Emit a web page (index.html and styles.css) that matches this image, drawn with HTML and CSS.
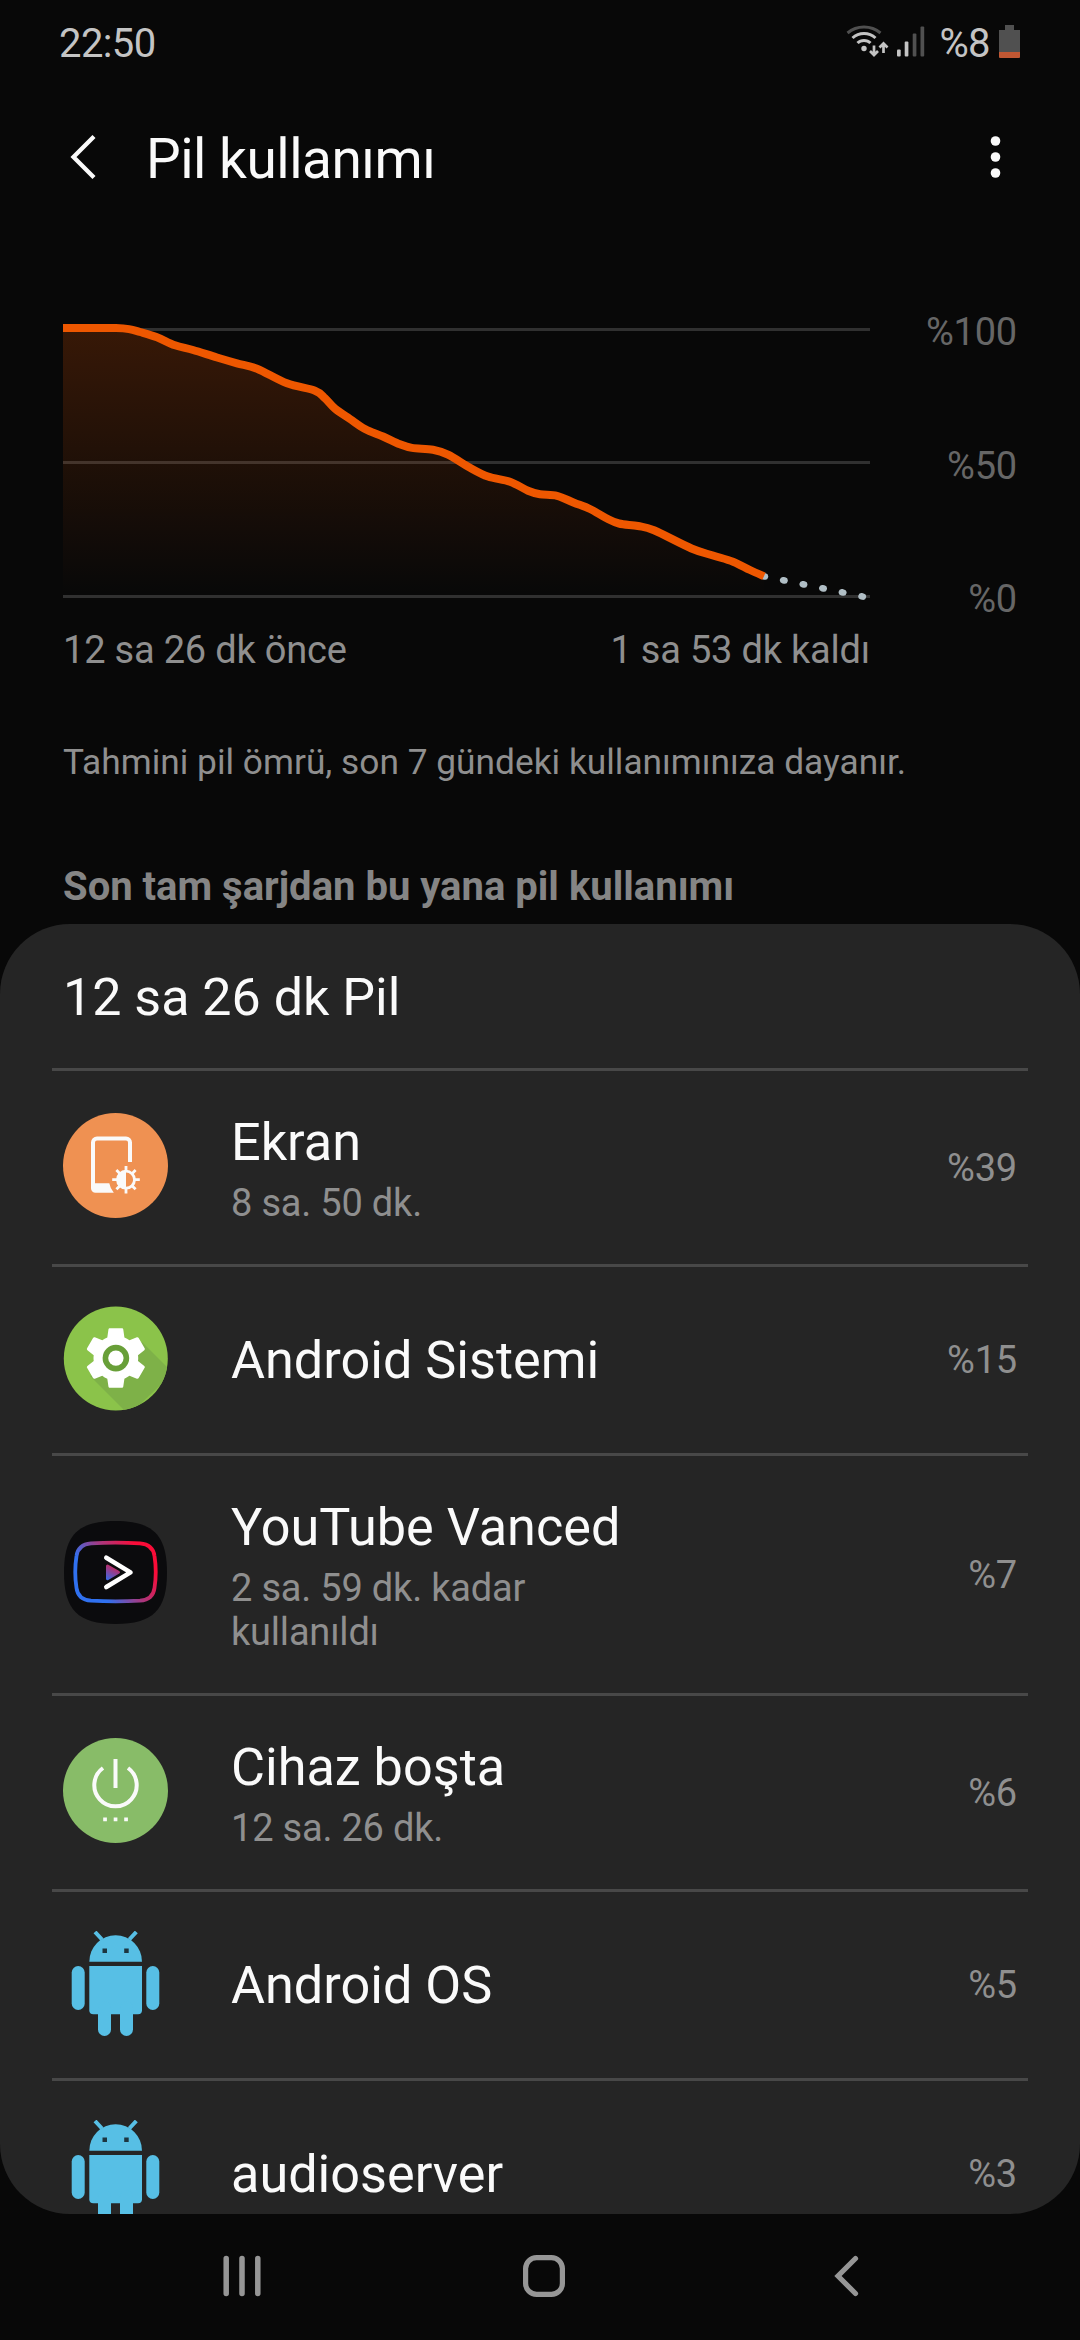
FILE: index.html
```html
<!DOCTYPE html>
<html lang="tr">
<head>
    <meta charset="UTF-8">
    <meta name="viewport" content="width=device-width, initial-scale=1.0">
    <title>Pil kullanımı</title>
    <link rel="stylesheet" href="styles.css">
</head>
<body>
    <div class="screen">
        <div class="status-bar">
            <span class="clock">22:50</span>
            <div class="status-icons">
                <svg class="wifi" width="44" height="36" viewBox="0 0 44 36">
                    <g fill="none" stroke="#c4c4c4" stroke-width="3">
                        <path d="M1.500 10C11 2 25 2 34.500 10" stroke="#505050"/>
                        <path d="M6.500 15C13 9 23 9 29.500 15"/>
                        <path d="M11.500 20C15 16.500 21 16.500 24.500 20"/>
                        <path d="M28 22.500v9M24 28l4 4 4-4M37.500 30v-9M33.500 24.500l4-4 4 4" stroke-width="2.700"/>
                    </g>
                    <circle cx="18" cy="25.500" r="2.700" fill="#c4c4c4"/>
                </svg>
                <svg class="signal" width="28" height="36" viewBox="0 0 28 36">
                    <rect x="0" y="26.500" width="3.700" height="7" rx="1" fill="#c4c4c4"/>
                    <rect x="7.700" y="18.500" width="3.700" height="15" rx="1" fill="#c4c4c4"/>
                    <rect x="15.700" y="10.500" width="3.700" height="23" rx="1" fill="#505050"/>
                    <rect x="23.500" y="3.500" width="3.700" height="30" rx="1" fill="#505050"/>
                </svg>
                <span class="level">%8</span>
                <svg class="battery" width="21" height="36" viewBox="0 0 21 36">
                    <path d="M6 2h9v5h6v26.500a1.500 1.500 0 0 1-1.500 1.500h-18a1.500 1.500 0 0 1-1.500-1.500V7h6z" fill="#505050"/>
                    <path d="M0 29h21v4.500a1.500 1.500 0 0 1-1.500 1.500h-18a1.500 1.500 0 0 1-1.500-1.500z" fill="#c05733"/>
                </svg>
            </div>
        </div>

        <div class="app-bar">
            <svg class="back" width="28" height="44" viewBox="0 0 28 44">
                <path d="M26 1.500L5.500 22l20.500 20.500" fill="none" stroke="#fafafa" stroke-width="4.300"/>
            </svg>
            <h1>Pil kullanımı</h1>
            <svg class="more" width="12" height="44" viewBox="0 0 12 44">
                <g fill="#fafafa">
                    <circle cx="5.500" cy="6" r="4.800"/>
                    <circle cx="5.500" cy="22" r="4.800"/>
                    <circle cx="5.500" cy="38" r="4.800"/>
                </g>
            </svg>
        </div>

        <div class="chart">
            <svg class="plot" width="807" height="280" viewBox="0 0 807 280">
                <defs>
                    <linearGradient id="fade" x1="0" y1="0" x2="0" y2="270" gradientUnits="userSpaceOnUse">
                        <stop offset="0" stop-color="#ee5700" stop-opacity="0.21"/>
                        <stop offset="1" stop-color="#ee5700" stop-opacity="0"/>
                    </linearGradient>
                </defs>
                <g fill="#303030">
                    <rect y="4" width="807" height="3"/>
                    <rect y="137" width="807" height="3"/>
                    <rect y="271" width="807" height="3"/>
                </g>
                <path id="area" fill="url(#fade)"/>
                <path class="forecast" d="M700.500 252.200L800 272.600"/>
                <path id="line" class="usage-line"/>
            </svg>
            <div class="axis">
                <span>%100</span>
                <span>%50</span>
                <span>%0</span>
            </div>
        </div>
        <div class="times">
            <span>12 sa 26 dk önce</span>
            <span>1 sa 53 dk kaldı</span>
        </div>
        <p class="note">Tahmini pil ömrü, son 7 gündeki kullanımınıza dayanır.</p>
        <h2>Son tam şarjdan bu yana pil kullanımı</h2>

        <div class="card">
            <div class="card-title">12 sa 26 dk Pil</div>

            <div class="row tall">
                <svg class="icon" viewBox="0 0 105 105">
                    <circle cx="52.500" cy="52.500" r="52.500" fill="#ef9152"/>
                    <path d="M67 49V29.500a4 4 0 0 0-4-4H34a4 4 0 0 0-4 4V74" fill="none" stroke="#fafafa" stroke-width="4"/>
                    <path d="M28 70.300h18.300q1 5.500 4.500 9.400H32.500a4.500 4.500 0 0 1-4.500-4.500z" fill="#fafafa"/>
                    <g transform="translate(63 66.700)" stroke="#fafafa" stroke-width="2.800">
                        <circle r="8.500" fill="none"/>
                        <path d="M0-8.500A8.500 8.500 0 0 0 0 8.500z" fill="#fafafa" stroke="none"/>
                        <path d="M0-13.800V-9M0 9v4.800M-13.800 0H-9M9 0h4.800M-9.600-9.600L-6-6M6 6l3.600 3.600M-9.600 9.600L-6 6M6-6l3.600-3.600"/>
                    </g>
                </svg>
                <div class="info">
                    <div class="name">Ekran</div>
                    <div class="detail">8 sa. 50 dk.</div>
                </div>
                <span class="percent">%39</span>
            </div>

            <div class="row">
                <svg class="icon" viewBox="0 0 105 105">
                    <defs>
                        <clipPath id="disc"><circle cx="52.800" cy="52.500" r="52"/></clipPath>
                    </defs>
                    <circle cx="52.800" cy="52.500" r="52" fill="#8bc34a"/>
                    <path d="M27 70L66 109 110 67 79 36z" fill="#7eb148" clip-path="url(#disc)"/>
                    <path transform="translate(17.100 16.300) scale(2.980)" fill="#fff" d="M19.430 12.980c.04-.32.07-.64.07-.98s-.03-.66-.07-.98l2.110-1.650c.19-.15.24-.42.12-.64l-2-3.460c-.12-.22-.39-.3-.61-.22l-2.490 1c-.52-.4-1.080-.73-1.690-.98l-.38-2.650C14.460 2.180 14.250 2 14 2h-4c-.25 0-.46.18-.49.42l-.38 2.650c-.61.25-1.170.59-1.690.98l-2.490-1c-.23-.09-.49 0-.61.22l-2 3.460c-.13.22-.07.49.12.64l2.110 1.650c-.04.32-.07.65-.07.98s.03.66.07.98l-2.110 1.650c-.19.15-.24.42-.12.64l2 3.460c.12.22.39.3.61.22l2.490-1c.52.4 1.080.73 1.690.98l.38 2.650c.03.24.24.42.49.42h4c.25 0 .46-.18.49-.42l.38-2.650c.61-.25 1.170-.59 1.690-.98l2.490 1c.23.09.49 0 .61-.22l2-3.460c.12-.22.07-.49-.12-.64z"/>
                    <circle cx="52.900" cy="52.100" r="13.300" fill="#689f38"/>
                    <circle cx="52.900" cy="52.100" r="7.700" fill="#fff"/>
                </svg>
                <div class="info">
                    <div class="name">Android Sistemi</div>
                </div>
                <span class="percent">%15</span>
            </div>

            <div class="row taller">
                <svg class="icon" viewBox="0 0 105 105">
                    <defs>
                        <linearGradient id="vanced" x1="20" y1="75" x2="85" y2="28" gradientUnits="userSpaceOnUse">
                            <stop offset="0.200" stop-color="#3071f0"/>
                            <stop offset="0.550" stop-color="#a8387f"/>
                            <stop offset="0.900" stop-color="#fa0c38"/>
                        </linearGradient>
                        <linearGradient id="play" x1="44" y1="59" x2="50" y2="47" gradientUnits="userSpaceOnUse">
                            <stop offset="0" stop-color="#3f66e0"/>
                            <stop offset="1" stop-color="#bb2c68"/>
                        </linearGradient>
                    </defs>
                    <path d="M52.500 1C90 1 104 15 104 52.500S90 104 52.500 104 1 90 1 52.500 15 1 52.500 1z" fill="#0b0b0d"/>
                    <path d="M28 23.300Q52.500 22 77 23.300Q90 24.300 91.500 36Q94 52 91.500 68Q90 79.700 77 80.700Q52.500 82 28 80.700Q15 79.700 13.500 68Q11 52 13.500 36Q15 24.300 28 23.300z" fill="none" stroke="url(#vanced)" stroke-width="3.800"/>
                    <path d="M44.500 46L55.500 52.300 44.500 58.800z" fill="url(#play)" stroke="url(#play)" stroke-width="3" stroke-linejoin="round"/>
                    <path d="M43.300 37.700L67.500 52.400 43.300 67" fill="none" stroke="#fff" stroke-width="4.600" stroke-linecap="round" stroke-linejoin="round"/>
                </svg>
                <div class="info">
                    <div class="name">YouTube Vanced</div>
                    <div class="detail">2 sa. 59 dk. kadar kullanıldı</div>
                </div>
                <span class="percent">%7</span>
            </div>

            <div class="row tall">
                <svg class="icon" viewBox="0 0 105 105">
                    <circle cx="52.500" cy="52.500" r="52.500" fill="#88bc68"/>
                    <path d="M40 30A21.200 21.200 0 1 0 65 30M52.500 21v29" fill="none" stroke="#fafafa" stroke-width="4"/>
                    <path d="M40.200 79.500h3.700v3.700h-3.700zM50.700 79.500h3.700v3.700h-3.700zM61.200 79.500h3.700v3.700h-3.700z" fill="#fafafa"/>
                </svg>
                <div class="info">
                    <div class="name">Cihaz boşta</div>
                    <div class="detail">12 sa. 26 dk.</div>
                </div>
                <span class="percent">%6</span>
            </div>

            <div class="row">
                <svg class="icon" viewBox="0 0 105 105">
                    <g id="robot" fill="#57bfe5">
                        <path d="M26.300 30.700a26.350 26.350 0 0 1 52.700 0z"/>
                        <path d="M32 1l7 7.500M73.300 1l-7 7.500" stroke="#57bfe5" stroke-width="4"/>
                        <path d="M26.300 35H79v44.300a4 4 0 0 1-4 4H30.300a4 4 0 0 1-4-4z"/>
                        <rect x="8.700" y="35" width="13" height="44" rx="6.500"/>
                        <rect x="83.300" y="35" width="13" height="44" rx="6.500"/>
                        <rect x="35" y="70" width="13" height="35" rx="6.500"/>
                        <rect x="57" y="70" width="13" height="35" rx="6.500"/>
                        <path d="M39.500 17.500h4.500v4.500h-4.500zM61.200 17.500h4.500v4.500h-4.500z" fill="#1d3540"/>
                    </g>
                </svg>
                <div class="info">
                    <div class="name">Android OS</div>
                </div>
                <span class="percent">%5</span>
            </div>

            <div class="row">
                <svg class="icon" viewBox="0 0 105 105"><use href="#robot"/></svg>
                <div class="info">
                    <div class="name">audioserver</div>
                </div>
                <span class="percent">%3</span>
            </div>
        </div>

        <div class="nav-bar">
            <svg width="42" height="44" viewBox="0 0 42 44">
                <path d="M4.200 4.500v35M20 4.500v35M35.800 4.500v35" stroke="#969696" stroke-width="5.500" stroke-linecap="round"/>
            </svg>
            <svg class="home" width="44" height="44" viewBox="0 0 44 44">
                <rect x="3.600" y="3.600" width="36.800" height="36.800" rx="11" fill="none" stroke="#969696" stroke-width="5.200"/>
            </svg>
            <svg width="28" height="44" viewBox="0 0 28 44">
                <path d="M22.500 4.500L5 22l17.500 17.500" fill="none" stroke="#969696" stroke-width="5.200" stroke-linecap="round"/>
            </svg>
        </div>
    </div>

    <script>
        // battery level over time, in plot coordinates
        const points = [
            [0, 4], [28, 4], [53, 4], [66, 5.1], [77, 8], [94, 13.3], [112, 21.3], [130, 26],
            [154, 33.5], [174, 39.3], [194, 44.7], [224, 59.3], [252, 66.7],
            [262, 74.3], [272, 84.7], [287, 95], [302, 105], [320, 112.5],
            [337, 120.3], [349, 123.9], [370, 125.7], [385, 130.7], [407, 143.7],
            [425, 152.5], [447, 157.7], [465, 166.7], [477, 170.3], [494, 171.9],
            [511, 178.7], [527, 185], [543, 194], [556, 199.5], [575, 202],
            [591, 206.3], [628.5, 224.5], [650, 231.5], [670, 237.7], [687, 246], [701, 252.2]
        ];

        function smoothPath(pts) {
            let d = `M${pts[0][0]} ${pts[0][1]}`;
            for (let i = 0; i < pts.length - 1; i++) {
                const p0 = pts[i - 1] || pts[i];
                const p1 = pts[i];
                const p2 = pts[i + 1];
                const p3 = pts[i + 2] || p2;
                d += `C${p1[0] + (p2[0] - p0[0]) / 6} ${p1[1] + (p2[1] - p0[1]) / 6} `
                   + `${p2[0] - (p3[0] - p1[0]) / 6} ${p2[1] - (p3[1] - p1[1]) / 6} ${p2[0]} ${p2[1]}`;
            }
            return d;
        }

        const curve = smoothPath(points);
        document.getElementById('line').setAttribute('d', curve);
        document.getElementById('area').setAttribute('d', curve + 'V271H0Z');
    </script>
</body>
</html>
```
FILE: styles.css
```css
* {
    box-sizing: border-box;
}
body {
    margin: 0;
    background: #080808;
    color: #fafafa;
    font-family: Roboto, "Noto Sans", sans-serif;
}
svg {
    display: block;
    flex-shrink: 0;
}
.screen {
    width: 1080px;
    height: 2340px;
    display: flex;
    flex-direction: column;
    overflow: hidden;
}
.status-bar {
    height: 87px;
    padding: 0 60px 0 59px;
    display: flex;
    align-items: center;
    justify-content: space-between;
    font-size: 40px;
    letter-spacing: -0.6px;
    color: #c4c4c4;
}
.status-icons {
    display: flex;
    align-items: center;
}
.wifi, .signal, .battery {
    margin-top: -5px;
}
.signal {
    margin-left: 7px;
}
.level {
    margin-left: 14px;
}
.battery {
    margin-left: 9px;
}
.app-bar {
    height: 144px;
    padding: 0 78px 0 68px;
    display: flex;
    align-items: center;
}
.app-bar h1 {
    flex: 1;
    margin: 0 0 0 50px;
    font-size: 55px;
    font-weight: 400;
    letter-spacing: -0.5px;
}
.back, .more {
    margin-top: -5px;
}
.chart {
    height: 311px;
    margin-top: 79px;
    padding: 0 63px;
    display: flex;
    justify-content: space-between;
}
.plot {
    margin-top: 14px;
}
.usage-line {
    fill: none;
    stroke: #ee5700;
    stroke-width: 8;
    stroke-linejoin: round;
}
.forecast {
    fill: none;
    stroke: #b0bec5;
    stroke-width: 6.5;
    stroke-linecap: round;
    stroke-dasharray: 1.5 18.5;
}
.axis {
    display: flex;
    flex-direction: column;
    justify-content: space-between;
    text-align: right;
    font-size: 38px;
    line-height: 44px;
    letter-spacing: -0.2px;
    color: #666;
}
.times {
    width: 807px;
    margin: 7px 0 0 63px;
    display: flex;
    justify-content: space-between;
    font-size: 38px;
    line-height: 44px;
    letter-spacing: -0.2px;
    color: #8f8f8f;
}
.note {
    margin: 69px 63px 0;
    font-size: 35.3px;
    line-height: 42px;
    color: #8f8f8f;
}
h2 {
    margin: 82px 63px 0;
    font-size: 40px;
    line-height: 44px;
    font-weight: 700;
    color: #858585;
}
.card {
    height: 1290px;
    margin-top: 15px;
    padding: 0 52px;
    border-radius: 70px;
    background: #252525;
    overflow: hidden;
}
.card-title {
    height: 144px;
    padding: 43px 11px 0;
    font-size: 52px;
    line-height: 62px;
}
.row {
    height: 189px;
    padding: 0 11px;
    border-top: 3px solid #484848;
    display: flex;
    align-items: center;
}
.row.tall {
    height: 196px;
}
.row.taller {
    height: 240px;
}
.icon {
    width: 105px;
    height: 105px;
    margin-bottom: 4px;
}
.info {
    flex: 1;
    margin-left: 63px;
}
.name {
    font-size: 52.2px;
    line-height: 61px;
}
.tall .info, .taller .info {
    padding-top: 2px;
}
.detail {
    max-width: 420px;
    margin-top: 8px;
    font-size: 38px;
    line-height: 44px;
    letter-spacing: -0.2px;
    color: #8f8f8f;
}
.percent {
    font-size: 38px;
    letter-spacing: -0.2px;
    color: #8f8f8f;
}
.nav-bar {
    flex: 1;
    padding: 0 219px 2px 222px;
    display: flex;
    align-items: center;
    justify-content: space-between;
}
.home {
    margin-right: 9px;
}
```
